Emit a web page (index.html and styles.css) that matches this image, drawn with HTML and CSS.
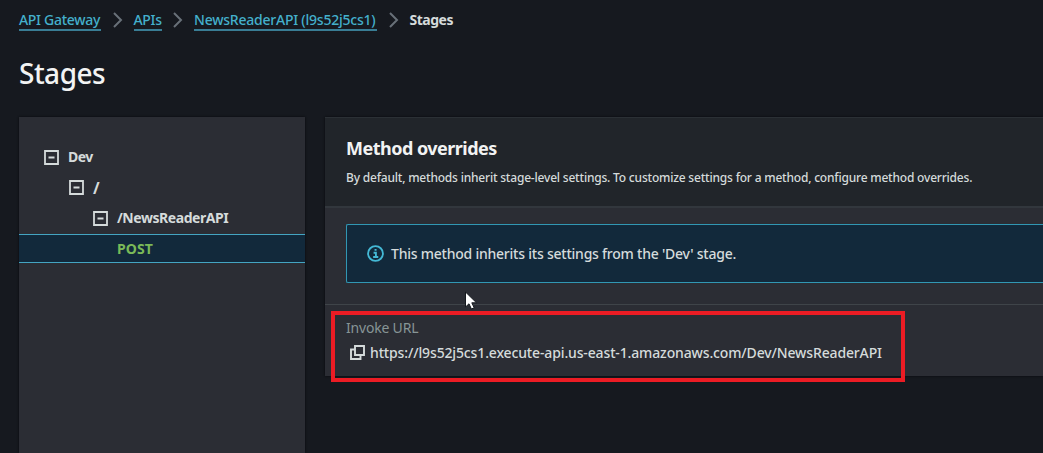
FILE: index.html
```html
<!DOCTYPE html>
<html lang="en">
<head>
<meta charset="utf-8">
<title>Stages - API Gateway</title>
<link rel="stylesheet" href="styles.css">
</head>
<body>
<nav class="crumbs">
  <a class="link c-gateway">API Gateway</a>
  <svg class="chevron" viewBox="0 0 10 16"><path d="M1 1l7 7-7 7"/></svg>
  <a class="link c-apis">APIs</a>
  <svg class="chevron" viewBox="0 0 10 16"><path d="M1 1l7 7-7 7"/></svg>
  <a class="link c-name">NewsReaderAPI (l9s52j5cs1)</a>
  <svg class="chevron" viewBox="0 0 10 16"><path d="M1 1l7 7-7 7"/></svg>
  <span class="current">Stages</span>
</nav>
<h1 class="title">Stages</h1>
<main class="columns">
  <aside class="tree">
    <div class="node level-1"><svg class="toggle" viewBox="0 0 15 15"><path d="M1 1h13v13H1zM4.5 7.5h6"/></svg><span class="n-dev">Dev</span></div>
    <div class="node level-2"><svg class="toggle" viewBox="0 0 15 15"><path d="M1 1h13v13H1zM4.5 7.5h6"/></svg><span class="n-root">/</span></div>
    <div class="node level-3"><svg class="toggle" viewBox="0 0 15 15"><path d="M1 1h13v13H1zM4.5 7.5h6"/></svg><span class="n-api">/NewsReaderAPI</span></div>
    <div class="node selected"><span class="n-post">POST</span></div>
  </aside>
  <section class="panel">
    <header class="panel-head">
      <h2 class="heading">Method overrides</h2>
      <p class="description">By default, methods inherit stage-level settings. To customize settings for a method, configure method overrides.</p>
    </header>
    <div class="panel-body">
      <div class="alert">
        <svg class="info" viewBox="0 0 16 16"><circle cx="8" cy="8" r="7"/><path d="M6.2 7.3h2.2v4M5.8 11.3h4.8M7.1 4.6h1.9"/></svg>
        <span class="alert-text">This method inherits its settings from the 'Dev' stage.</span>
      </div>
    </div>
    <footer class="invoke">
      <div class="label">Invoke URL</div>
      <div class="url-row">
        <svg class="copy" viewBox="0 0 15 15"><path d="M5 1h9v9H5zM5 4.5H1V14h9.5v-4"/></svg>
        <span class="url">https://l9s52j5cs1.execute-api.us-east-1.amazonaws.com/Dev/NewsReaderAPI</span>
      </div>
      <div class="highlight"></div>
    </footer>
    <svg class="cursor" viewBox="0 0 13 20"><path d="M1 1v15l3.5-3.2 2.4 5.2 2.8-1.2-2.4-5H12z"/></svg>
  </section>
</main>
</body>
</html>
```
FILE: styles.css
```css
* { box-sizing: border-box; }
body {
  margin: 0;
  height: 453px;
  overflow: hidden;
  background: #16191f;
  color: #d5dbdb;
  font: 500 14px/20px "Noto Sans", sans-serif;
  white-space: nowrap;
}
svg { display: block; fill: none; flex: none; }
.crumbs { display: flex; align-items: center; height: 40px; padding-left: 19px; }
.link { color: #44b0cc; height: 21px; margin-top: 1px; border-bottom: 2px solid #397d94; }
.c-gateway { width: 82px; letter-spacing: -.3px; }
.c-apis { width: 28px; letter-spacing: -.3px; }
.c-name { width: 183px; letter-spacing: -.23px; }
.chevron { width: 10px; height: 16px; margin: 0 11px 0 11.5px; stroke: #687078; stroke-width: 2; }
.current { font-weight: 700; letter-spacing: -.5px; }
.title { margin: 13px 0 24px 19px; font-size: 28px; line-height: 40px; font-weight: 500; color: #f2f3f3; letter-spacing: -.5px; }
.columns { display: flex; gap: 20px; padding-left: 19px; }
.tree { width: 286px; height: 336px; padding-top: 25px; background: #2b2d34; box-shadow: 0 0 2px #08090b; flex: none; }
.node { display: flex; align-items: center; gap: 9px; height: 30.67px; font-weight: 700; }
.level-1 { padding-left: 25px; }
.level-2 { padding-left: 50px; }
.level-3 { padding-left: 74px; }
.n-dev { letter-spacing: -.5px; }
.n-api { letter-spacing: -.44px; }
.n-root { font-size: 16px; }
.n-post { padding-top: 1px; letter-spacing: .1px; }
.toggle { width: 15px; height: 15px; stroke: #d5dbdb; stroke-width: 1.8; }
.level-3 .toggle, .level-3 span { margin-top: -1px; }
.selected { height: 29px; padding-left: 98px; background: #12293b; border-top: 1px solid #44a5c2; border-bottom: 1px solid #44a5c2; color: #7aba58; }
.panel { position: relative; width: 718px; height: 259px; background: #2b2d34; box-shadow: 0 0 2px #08090b; flex: none; }
.panel-head { height: 89px; padding: 18px 20px 0 21px; background: #21252a; border-top: 1px solid #2b3035; }
.heading { margin: 0; font-size: 18px; line-height: 24px; font-weight: 700; color: #f2f3f3; letter-spacing: -.52px; }
.description { margin: 8px 0 0; font-size: 12px; line-height: 20px; letter-spacing: -.2px; }
.panel-body { height: 98px; padding: 17px 0 0 21px; border-top: 2px solid #32373d; }
.alert { display: flex; align-items: center; gap: 8px; height: 59px; margin-top: -1px; padding-left: 20px; background: #12293b; border: 1px solid #3197b3; border-right: 0; border-radius: 2px 0 0 2px; }
.alert-text { margin-left: -1px; letter-spacing: -.23px; }
.info { width: 17px; height: 17px; stroke: #44b9d6; stroke-width: 1.7; }
.invoke { position: relative; height: 72px; padding: 13px 0 0 21px; border-top: 1px solid #3f4449; }
.label { color: #879596; font-weight: 400; line-height: 20px; letter-spacing: -.2px; }
.url-row { display: flex; align-items: center; gap: 5px; height: 29px; padding-left: 4px; }
.url { letter-spacing: -.14px; }
.copy { width: 15px; height: 15px; stroke: #d5dbdb; stroke-width: 1.9; }
.highlight { position: absolute; left: 6px; top: 6px; width: 574px; height: 71px; border: 4px solid #ec1c24; }
.cursor { position: absolute; left: 139px; top: 174px; width: 14px; height: 20px; fill: #fff; stroke: #15191e; stroke-width: 1; }
```
